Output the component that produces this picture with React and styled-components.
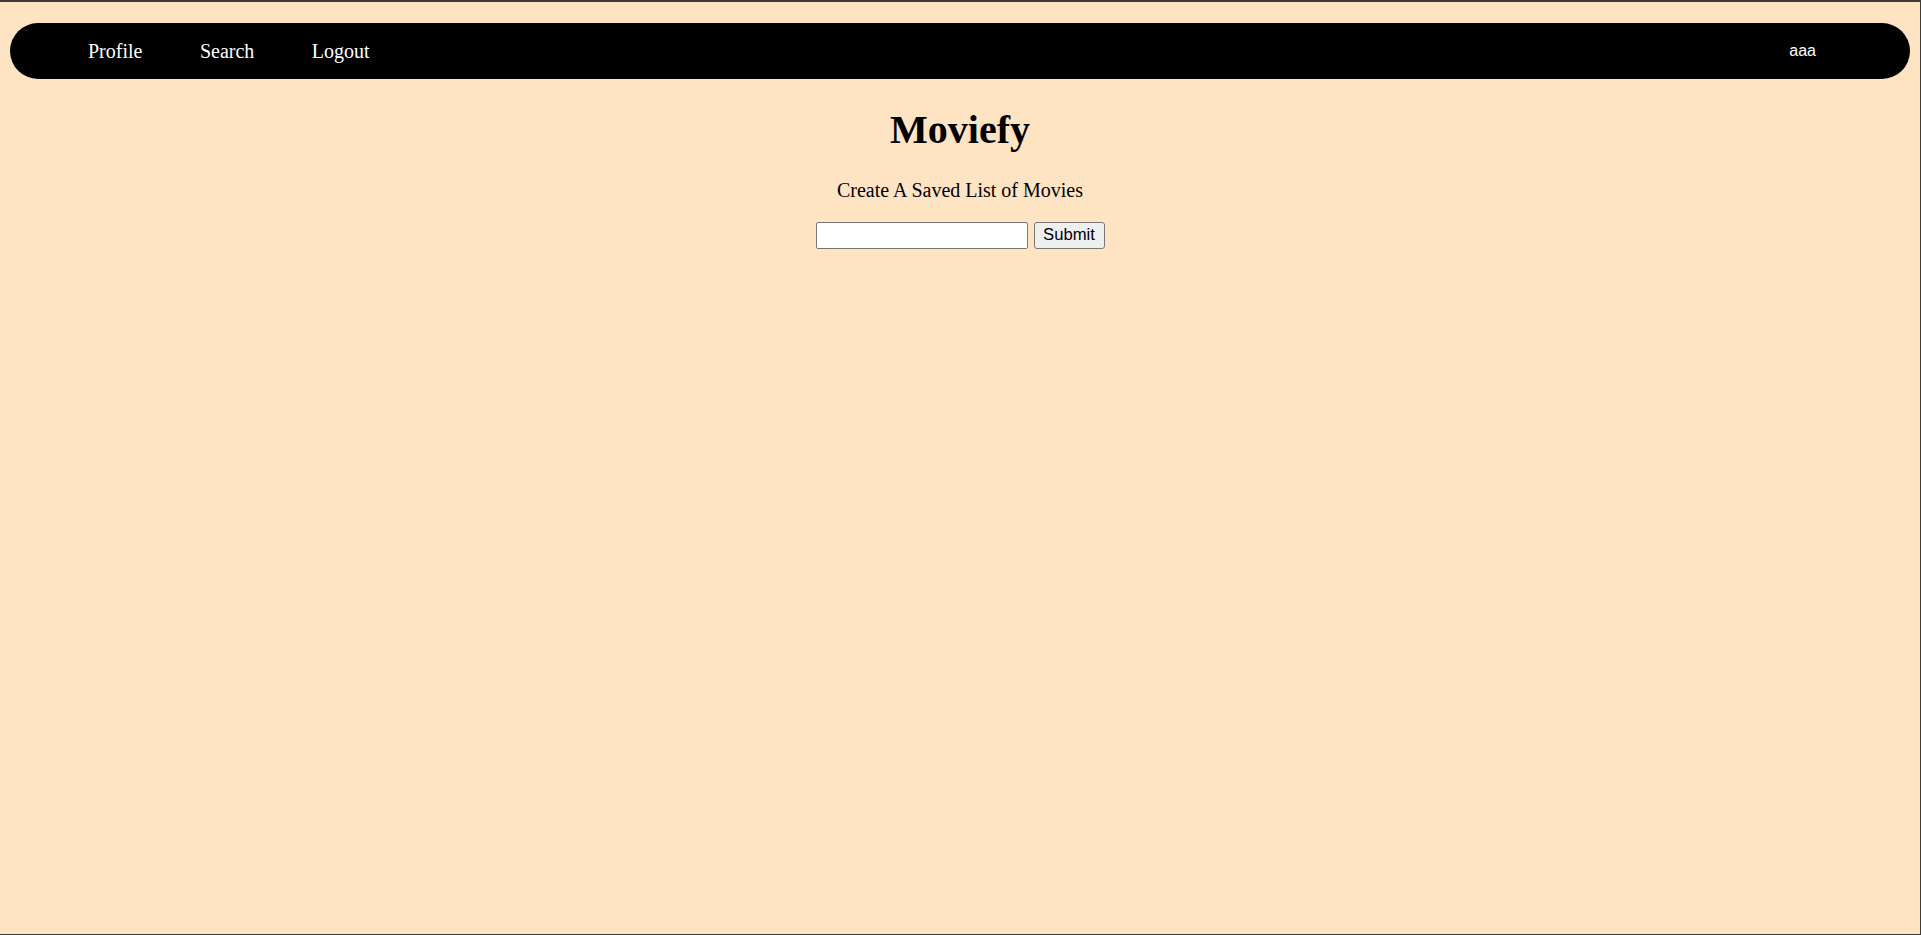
import styled, { createGlobalStyle } from "styled-components";

const GlobalStyle = createGlobalStyle`
    html, body {
        margin: 0;
        padding: 0;
        background: #3b3b3b;
    }

    body {
        font-family: "Liberation Serif", "Times New Roman", serif;
    }
`

const Page = styled.div`
    box-sizing: border-box;
    min-height: calc(100vh - 3px);
    margin: 2px 1px 1px 0;
    padding: 21px 10px 10px;
    background: bisque;
    color: black;
`

const NavBar = styled.nav`
    display: flex;
    justify-content: space-between;
    align-items: center;
    height: 56px;
    padding: 0 94px 0 78px;
    background: black;
    border-radius: 28px;
    color: white;

    ul {
        display: flex;
        gap: 57.5px;
        margin: 0;
        padding: 0;
        list-style: none;
    }

    a {
        color: white;
        font-size: 20px;
        text-decoration: none;
        cursor: pointer;
    }
`

const UserName = styled.span`
    font-family: "Liberation Sans", Arial, sans-serif;
    font-size: 16px;
`

const Main = styled.main`
    display: flex;
    flex-direction: column;
    align-items: center;
    margin-left: -10px;
    margin-right: -10px;

    h1 {
        margin: 27px 0 0;
        font-size: 40px;
        font-weight: bold;
    }

    p {
        margin: 26px 0 0;
        font-size: 20px;
    }
`

const SearchForm = styled.form`
    display: flex;
    gap: 6px;
    margin-top: 19.5px;

    input, button {
        box-sizing: border-box;
        height: 27px;
        border: 1px solid #767676;
        font-family: "Liberation Sans", Arial, sans-serif;
        font-size: 16.67px;
    }

    input {
        width: 212px;
        padding: 1px 3px;
        background: white;
        border-radius: 2px;
    }

    button {
        width: 71px;
        padding: 0;
        background: #efefef;
        border-radius: 3px;
        color: black;
    }
`

const App = () => {
    return (
        <>
            <GlobalStyle />
            <Page>
                <NavBar>
                    <ul>
                        <li><a>Profile</a></li>
                        <li><a>Search</a></li>
                        <li><a>Logout</a></li>
                    </ul>
                    <UserName>aaa</UserName>
                </NavBar>
                <Main>
                    <h1>Moviefy</h1>
                    <p>Create A Saved List of Movies</p>
                    <SearchForm onSubmit={(e) => e.preventDefault()}>
                        <input type="text" />
                        <button type="submit">Submit</button>
                    </SearchForm>
                </Main>
            </Page>
        </>
    )
}

export default App;
